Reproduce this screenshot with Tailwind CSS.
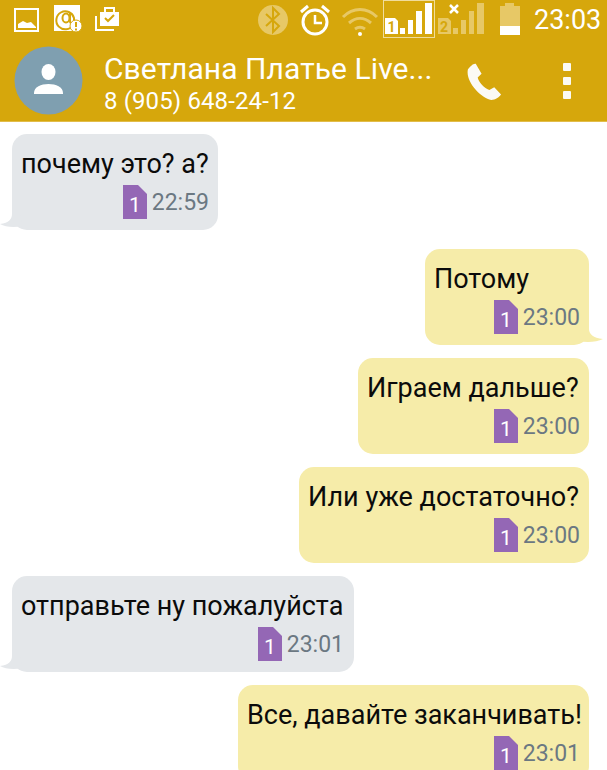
<!DOCTYPE html>
<html lang="ru"><head><meta charset="utf-8">
<script src="https://cdn.jsdelivr.net/npm/@tailwindcss/browser@4"></script>
</head>
<body class="w-[607px] h-[770px] overflow-hidden bg-white font-['Roboto',sans-serif]">
<header class="h-[121px] bg-[#d6a70c] text-white border-b border-[#e2bd4a] box-content">
  <div class="relative h-[41px]">
    <div class="flex items-start">
      <svg class="ml-[14px] mt-[8px]" width="26" height="24" viewBox="0 0 26 24"><rect x="1" y="1" width="23" height="22" fill="none" stroke="#fff" stroke-width="2"/><path d="M4 20v-4l5-3 4 2 4-1 5 5v1z" fill="#fff"/></svg>
      <svg class="ml-[13px] mt-[5px]" width="30" height="30" viewBox="0 0 30 30"><rect x="1" y="0" width="26" height="26" fill="#fff"/><path d="M20 20a9 9 0 1 1 1-7v3c0 3-4 3-4 0V8" fill="none" stroke="#d6a70c" stroke-width="2"/><ellipse cx="13" cy="13" rx="3.500" ry="4.500" fill="none" stroke="#d6a70c" stroke-width="2"/><circle cx="23" cy="21" r="6" fill="#fff" stroke="#d6a70c" stroke-width="1"/><path d="M23 17v5M23 23.500v2" stroke="#d6a70c" stroke-width="2"/></svg>
      <svg class="ml-[12px] mt-[6px]" width="27" height="26" viewBox="0 0 27 26"><path d="M1 10v14h18" fill="none" stroke="#fff" stroke-width="2"/><path d="M5 6h19v14H5z" fill="#fff"/><path d="M10 6V2h9v4" fill="none" stroke="#fff" stroke-width="2"/><path d="M10 12l3 3 6-6" fill="none" stroke="#d6a70c" stroke-width="2"/></svg>
      <svg class="ml-[135px] mt-[4px]" width="32" height="32" viewBox="0 0 32 32"><circle cx="16" cy="16" r="15" fill="#e7c866"/><path d="M9 10l13 12-6 6V4l6 6-13 12" fill="none" stroke="#d6a70c" stroke-width="2"/></svg>
      <svg class="ml-[9px] mt-[3px]" width="34" height="34" viewBox="0 0 34 34"><circle cx="17" cy="19" r="12" fill="none" stroke="#fff" stroke-width="3"/><path d="M17 12v8h7" fill="none" stroke="#fff" stroke-width="2.500"/><path d="M3 9l7-6M31 9l-7-6" stroke="#fff" stroke-width="3"/></svg>
      <svg class="ml-[9px] mt-[6px]" width="38" height="30" viewBox="0 0 38 30" fill="none" stroke="#e7c866" stroke-width="3"><path d="M2 11c10-10 24-10 34 0"/><path d="M8 17c7-6 15-6 22 0"/><path d="M14 23c3-2 7-2 10 0"/><circle cx="19" cy="28" r="2" fill="#fff" stroke="none"/></svg>
      <svg class="ml-[4px]" width="52" height="39" viewBox="0 0 52 39"><rect x="0.500" y="0.500" width="51" height="37" fill="none" stroke="#f0dc9c"/><path d="M2 18h10l3 3v13H2z" fill="#fff"/><text x="4.500" y="32" font-size="14" font-weight="700" fill="#d6a70c" font-family="Roboto">1</text><path d="M17 28h5v6h-5zM25 20h5v14h-5zM33 11h6v23h-6zM42 3h7v31h-7z" fill="#fff"/></svg>
      <svg class="ml-[1px]" width="50" height="36" viewBox="0 0 50 36"><path d="M2 18h10l3 3v13H2z" fill="#e7c866"/><text x="4" y="32" font-size="14" font-weight="700" fill="#d6a70c" font-family="Roboto">2</text><path d="M17 28h5v6h-5zM25 20h5v14h-5zM33 11h5v23h-5zM41 3h7v31h-7z" fill="#e7c866"/><path d="M14 5l8 8M22 5l-8 8" stroke="#fff" stroke-width="2.500"/></svg>
      <svg class="ml-[13px] mt-[3px]" width="22" height="32" viewBox="0 0 22 32"><path d="M6 0h9v3h6v31H1V3h5z" fill="#e7c866"/><rect x="1" y="23" width="20" height="11" fill="#fff"/></svg>
      <span class="ml-[13px] mt-[4px] text-[27px] leading-[32px]">23:03</span>
    </div>
  </div>
  <div class="flex items-start h-[80px]">
    <svg class="ml-[14px] mt-[5px] shrink-0" width="69" height="69" viewBox="0 0 69 69"><circle cx="34.500" cy="34.500" r="34" fill="#7f9fb0"/><ellipse cx="34.500" cy="26" rx="7" ry="8" fill="#fff"/><path d="M20 47c0-6 7-9 14.500-9S49 41 49 47v1H20z" fill="#fff"/></svg>
    <div class="ml-[21px] w-[330px] shrink-0">
      <div class="text-[30px] leading-[36px] mt-[10px] tracking-[0.08px] whitespace-nowrap">Светлана Платье Live...</div>
      <div class="text-[24px] leading-[28px] mt-[0px] tracking-[0.12px]">8 (905) 648-24-12</div>
    </div>
    <svg class="ml-[32px] mt-[21px] shrink-0" width="37" height="38" viewBox="0 0 38 42" preserveAspectRatio="none"><path d="M2 8c2-3 6-7 8-6l6 11-4 4c1 5 6 11 12 14l5-3 7 8c-2 3-6 6-10 6C15 40-1 21 2 8z" fill="#fbfaf5"/></svg>
    <div class="ml-[60px] mt-[22px] flex flex-col gap-[6px] shrink-0">
      <span class="w-[8px] h-[8px] rounded-[1px] bg-[#fbfaf5]"></span>
      <span class="w-[8px] h-[8px] rounded-[1px] bg-[#fbfaf5]"></span>
      <span class="w-[8px] h-[8px] rounded-[1px] bg-[#fbfaf5]"></span>
    </div>
  </div>
</header>
<main class="flex flex-col pt-[12px] gap-[13px] text-[27px] text-[#0b0b0b]">
  <div class="relative self-start ml-[12px] mb-[6px] w-[206px] h-[96px] rounded-[15px] bg-[#e4e7ea] pl-[9px] pr-[9px] pt-[14px]">
    <svg class="absolute -left-[12px] bottom-[2px]" width="22" height="14" viewBox="0 0 22 14"><path d="M12 0c0 5-3 9-12 10 5 3 14 4 22 2L20 0z" fill="#e4e7ea"/></svg>
    <div class="relative leading-[32px] whitespace-nowrap">почему это? а?</div>
    <div class="relative flex justify-end items-center mt-[5px] gap-[5px] text-[23px] leading-[36px] text-[#6b7882]"><svg class="-translate-y-px" width="24" height="34" viewBox="0 0 24 34"><path d="M0 0h15l9 9v25H0z" fill="#9467b5"/><text x="12" y="27" text-anchor="middle" font-size="21" fill="#fff" font-family="Roboto">1</text></svg><span>22:59</span></div>
  </div>
  <div class="relative self-end mr-[18px] w-[164px] h-[96px] rounded-[15px] bg-[#f6eca9] pl-[9px] pr-[9px] pt-[14px]">
    <svg class="absolute -right-[14px] bottom-[2px]" width="24" height="14" viewBox="0 0 24 14"><path d="M10 0c0 5 4 9 14 10-6 3-16 4-24 2L2 0z" fill="#f6eca9"/></svg>
    <div class="relative leading-[32px] whitespace-nowrap">Потому</div>
    <div class="relative flex justify-end items-center mt-[5px] gap-[5px] text-[23px] leading-[36px] text-[#6b7882]"><svg class="-translate-y-px" width="24" height="34" viewBox="0 0 24 34"><path d="M0 0h15l9 9v25H0z" fill="#9467b5"/><text x="12" y="27" text-anchor="middle" font-size="21" fill="#fff" font-family="Roboto">1</text></svg><span>23:00</span></div>
  </div>
  <div class="relative self-end mr-[18px] w-[231px] h-[96px] rounded-[15px] bg-[#f6eca9] pl-[9px] pr-[9px] pt-[14px]">
    <div class="relative leading-[32px] whitespace-nowrap">Играем дальше?</div>
    <div class="relative flex justify-end items-center mt-[5px] gap-[5px] text-[23px] leading-[36px] text-[#6b7882]"><svg class="-translate-y-px" width="24" height="34" viewBox="0 0 24 34"><path d="M0 0h15l9 9v25H0z" fill="#9467b5"/><text x="12" y="27" text-anchor="middle" font-size="21" fill="#fff" font-family="Roboto">1</text></svg><span>23:00</span></div>
  </div>
  <div class="relative self-end mr-[18px] w-[290px] h-[96px] rounded-[15px] bg-[#f6eca9] pl-[9px] pr-[9px] pt-[14px]">
    <div class="relative leading-[32px] whitespace-nowrap">Или уже достаточно?</div>
    <div class="relative flex justify-end items-center mt-[5px] gap-[5px] text-[23px] leading-[36px] text-[#6b7882]"><svg class="-translate-y-px" width="24" height="34" viewBox="0 0 24 34"><path d="M0 0h15l9 9v25H0z" fill="#9467b5"/><text x="12" y="27" text-anchor="middle" font-size="21" fill="#fff" font-family="Roboto">1</text></svg><span>23:00</span></div>
  </div>
  <div class="relative self-start ml-[12px] w-[342px] h-[96px] rounded-[15px] bg-[#e4e7ea] pl-[9px] pr-[10px] pt-[14px]">
    <svg class="absolute -left-[12px] bottom-[2px]" width="22" height="14" viewBox="0 0 22 14"><path d="M12 0c0 5-3 9-12 10 5 3 14 4 22 2L20 0z" fill="#e4e7ea"/></svg>
    <div class="relative leading-[32px] whitespace-nowrap">отправьте ну пожалуйста</div>
    <div class="relative flex justify-end items-center mt-[5px] gap-[5px] text-[23px] leading-[36px] text-[#6b7882]"><svg class="-translate-y-px" width="24" height="34" viewBox="0 0 24 34"><path d="M0 0h15l9 9v25H0z" fill="#9467b5"/><text x="12" y="27" text-anchor="middle" font-size="21" fill="#fff" font-family="Roboto">1</text></svg><span>23:01</span></div>
  </div>
  <div class="relative self-end mr-[18px] w-[351px] h-[96px] rounded-[15px] bg-[#f6eca9] pl-[9px] pr-[9px] pt-[14px]">
    <div class="relative leading-[32px] whitespace-nowrap">Все, давайте заканчивать!</div>
    <div class="relative flex justify-end items-center mt-[5px] gap-[5px] text-[23px] leading-[36px] text-[#6b7882]"><svg class="-translate-y-px" width="24" height="34" viewBox="0 0 24 34"><path d="M0 0h15l9 9v25H0z" fill="#9467b5"/><text x="12" y="27" text-anchor="middle" font-size="21" fill="#fff" font-family="Roboto">1</text></svg><span>23:01</span></div>
  </div>
</main>
</body></html>
